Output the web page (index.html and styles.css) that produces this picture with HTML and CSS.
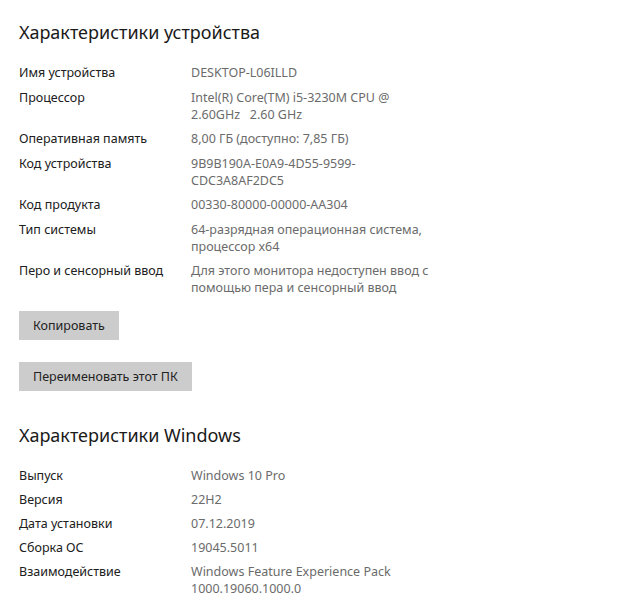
FILE: index.html
```html
<!DOCTYPE html>
<html lang="ru">
<head>
<meta charset="utf-8">
<title>Характеристики</title>
<link rel="stylesheet" href="styles.css">
</head>
<body>
<main class="page">
  <section class="section">
    <h2 class="title">Характеристики устройства</h2>
    <dl class="specs">
      <div class="row"><dt>Имя устройства</dt><dd>DESKTOP-L06ILLD</dd></div>
      <div class="row"><dt>Процессор</dt><dd>Intel(R) Core(TM) i5-3230M CPU @<br>2.60GHz&nbsp;&nbsp; 2.60 GHz</dd></div>
      <div class="row"><dt>Оперативная память</dt><dd>8,00 ГБ (доступно: 7,85 ГБ)</dd></div>
      <div class="row"><dt>Код устройства</dt><dd>9B9B190A-E0A9-4D55-9599-<br>CDC3A8AF2DC5</dd></div>
      <div class="row"><dt>Код продукта</dt><dd>00330-80000-00000-AA304</dd></div>
      <div class="row"><dt>Тип системы</dt><dd>64-разрядная операционная система,<br>процессор x64</dd></div>
      <div class="row"><dt>Перо и сенсорный ввод</dt><dd>Для этого монитора недоступен ввод с<br>помощью пера и сенсорный ввод</dd></div>
    </dl>
    <div class="actions">
      <button class="btn" type="button">Копировать</button>
      <button class="btn" type="button">Переименовать этот ПК</button>
    </div>
  </section>
  <section class="section section-win">
    <h2 class="title">Характеристики Windows</h2>
    <dl class="specs specs-win">
      <div class="row"><dt>Выпуск</dt><dd>Windows 10 Pro</dd></div>
      <div class="row"><dt>Версия</dt><dd>22H2</dd></div>
      <div class="row"><dt>Дата установки</dt><dd>07.12.2019</dd></div>
      <div class="row"><dt>Сборка ОС</dt><dd>19045.5011</dd></div>
      <div class="row"><dt>Взаимодействие</dt><dd>Windows Feature Experience Pack<br>1000.19060.1000.0</dd></div>
    </dl>
  </section>
</main>
</body>
</html>
```
FILE: styles.css
```css
html, body {
  margin: 0;
  padding: 0;
  background: #ffffff;
}
body {
  font-family: "Noto Sans", "Open Sans", sans-serif;
  color: #1f1f1f;
}
.page {
  padding: 20px 19px 0 19px;
}
.title {
  margin: 0;
  font-weight: 400;
  font-size: 18px;
  line-height: 24px;
  color: #1a1a1a;
}
.specs {
  margin: 20px 0 0 0;
  display: flex;
  flex-direction: column;
  gap: 7.5px;
}
.specs-win {
  margin-top: 20px;
  gap: 7px;
}
.row {
  display: grid;
  grid-template-columns: 172px 1fr;
  font-size: 12.5px;
  line-height: 17px;
}
.row dt {
  margin: 0;
  color: #202020;
}
.row dd {
  margin: 0;
  color: #6b6b6b;
}
.actions {
  margin-top: 15px;
  display: flex;
  flex-direction: column;
  align-items: flex-start;
  gap: 22px;
}
.btn {
  font-family: inherit;
  font-size: 12.5px;
  color: #222222;
  background: #cccccc;
  border: none;
  height: 29px;
  padding: 0 14px;
  margin: 0;
}
.section-win {
  margin-top: 32px;
}
```
